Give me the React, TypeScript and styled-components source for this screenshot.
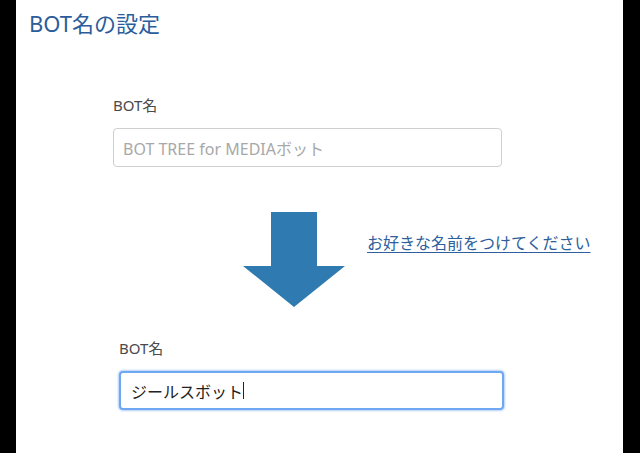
import React from "react";
import styled, { createGlobalStyle } from "styled-components";

const GlobalStyle = createGlobalStyle`
  html, body {
    margin: 0;
    padding: 0;
    background: #000;
  }
  body {
    font-family: "Noto Sans", "Noto Sans CJK JP", sans-serif;
  }
`;

const Page = styled.div`
  display: flex;
  width: 640px;
  height: 453px;
  background: #000;
`;

const Panel = styled.main`
  margin-left: 16px;
  width: 607px;
  height: 453px;
  background: #fff;
  display: flex;
  flex-direction: column;
  overflow: hidden;
`;

const Title = styled.h1`
  margin: 7px 0 0 13px;
  font-size: 22px;
  line-height: 32px;
  font-weight: 400;
  color: #2b5d9b;
`;

const FieldGroup = styled.section<{ $indent: number; $top: number }>`
  display: flex;
  flex-direction: column;
  align-items: flex-start;
  margin-top: ${(p) => p.$top}px;
  padding-left: ${(p) => p.$indent}px;
`;

const Label = styled.label<{ $gap: number }>`
  font-size: 15px;
  line-height: 20px;
  color: #4a4a4a;
  margin-bottom: ${(p) => p.$gap}px;
`;

const TextBox = styled.div<{ $focused?: boolean; $width: number }>`
  box-sizing: border-box;
  width: ${(p) => p.$width}px;
  height: 39px;
  display: flex;
  align-items: center;
  padding-left: ${(p) => (p.$focused ? 10 : 9)}px;
  border: ${(p) => (p.$focused ? "2px solid #6fa8f2" : "1px solid #cfcfcf")};
  border-radius: 4px;
  box-shadow: ${(p) =>
    p.$focused ? "0 0 2px 1px rgba(120, 170, 240, 0.55)" : "none"};
  background: #fff;
  color: #222;
`;

const Placeholder = styled.span`
  color: #a8a8a8;
  font-size: 16px;
`;

const Value = styled.span`
  font-size: 16px;
  color: #222;
`;

const Caret = styled.span`
  display: inline-block;
  width: 1px;
  height: 17px;
  background: #222;
`;

const ArrowRow = styled.div`
  display: flex;
  align-items: flex-start;
  gap: 22px;
  margin-top: 45px;
  padding-left: 227px;
`;

const HintLink = styled.a`
  margin-top: 21px;
  font-size: 16px;
  line-height: 20px;
  color: #2d5f9e;
  text-decoration: underline;
  text-underline-offset: 3px;
  text-decoration-thickness: 1px;
`;

const DownArrow = () => (
  <svg width="102" height="95" viewBox="0 0 102 95">
    <polygon
      points="28,0 74,0 74,54 102,54 51,95 0,54 28,54"
      fill="#2f7bb1"
    />
  </svg>
);

export default function App() {
  return (
    <>
      <GlobalStyle />
      <Page>
        <Panel>
          <Title>BOT名の設定</Title>
          <FieldGroup $indent={97} $top={56}>
            <Label $gap={13}>BOT名</Label>
            <TextBox $width={389}>
              <Placeholder>BOT TREE for MEDIAボット</Placeholder>
            </TextBox>
          </FieldGroup>
          <ArrowRow>
            <DownArrow />
            <HintLink href="#">お好きな名前をつけてください</HintLink>
          </ArrowRow>
          <FieldGroup $indent={103} $top={31}>
            <Label $gap={13}>BOT名</Label>
            <TextBox $focused $width={385}>
              <Value>ジールスボット</Value>
              <Caret />
            </TextBox>
          </FieldGroup>
        </Panel>
      </Page>
    </>
  );
}
